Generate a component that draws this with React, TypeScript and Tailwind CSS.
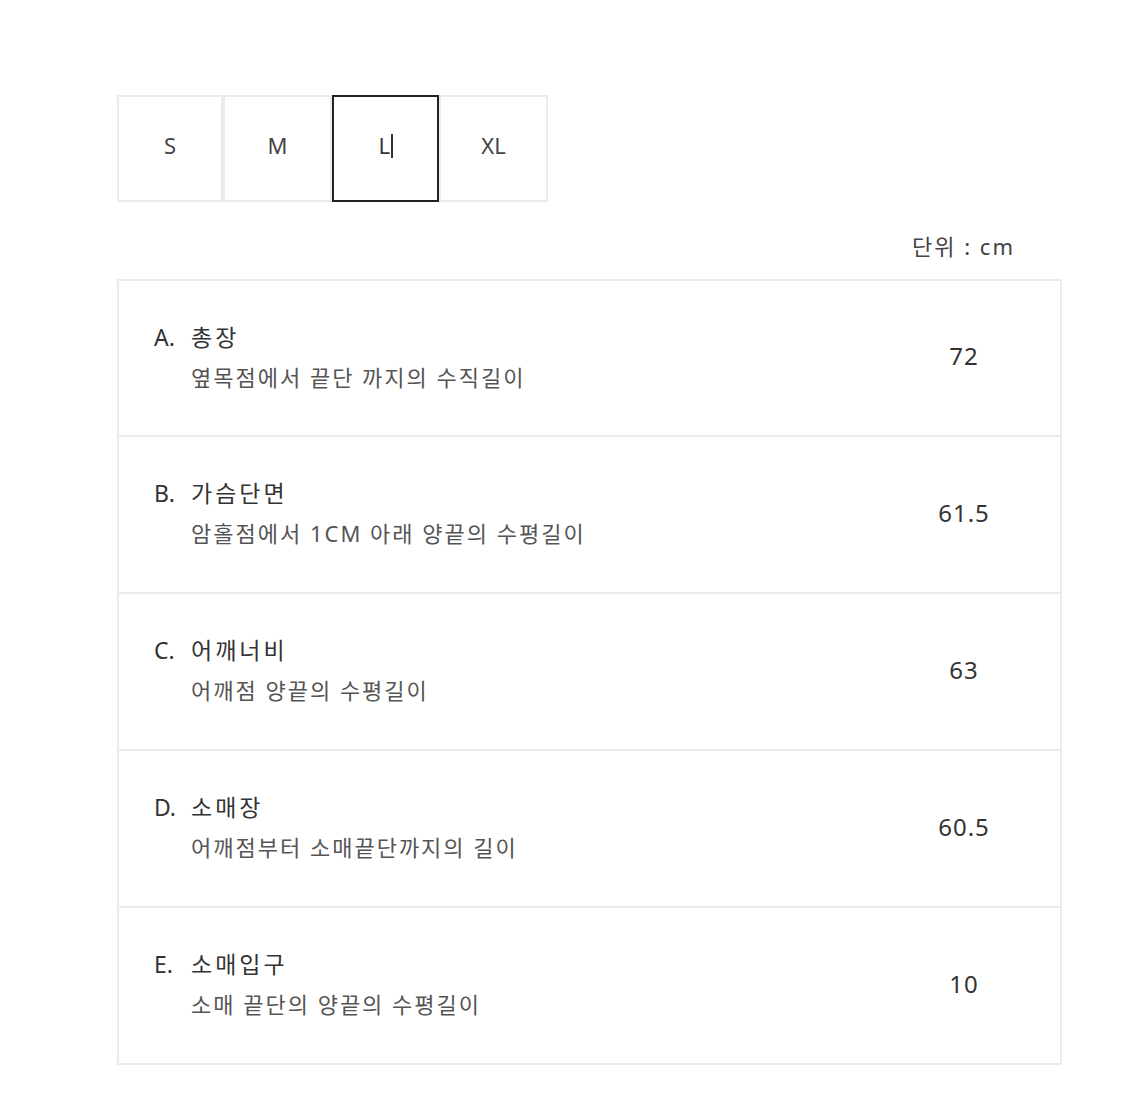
const SIZES = [
  { label: 'S', w: 'w-[106px]' },
  { label: 'M', w: 'w-[109px]' },
  { label: 'L', w: 'w-[107px]' },
  { label: 'XL', w: 'w-[109px]' },
];

const ROWS = [
  { key: 'A.', title: '총장', desc: '옆목점에서 끝단 까지의 수직길이', value: '72' },
  { key: 'B.', title: '가슴단면', desc: '암홀점에서 1CM 아래 양끝의 수평길이', value: '61.5' },
  { key: 'C.', title: '어깨너비', desc: '어깨점 양끝의 수평길이', value: '63' },
  { key: 'D.', title: '소매장', desc: '어깨점부터 소매끝단까지의 길이', value: '60.5' },
  { key: 'E.', title: '소매입구', desc: '소매 끝단의 양끝의 수평길이', value: '10' },
];

export default function App() {
  return (
    <div
      className="w-[1125px] h-[1097px] bg-white text-[#333]"
      style={{ fontFamily: '"Noto Sans", "Noto Sans CJK KR", sans-serif' }}
    >
      <div className="pt-[95px] pl-[117px] pr-[63px]">
        {/* size tabs */}
        <div className="flex">
          {SIZES.map((s) => {
            const active = s.label === 'L';
            return (
              <div
                key={s.label}
                className={
                  active
                    ? `${s.w} h-[107px] flex items-center justify-center pb-[6px] border-2 border-[#222] text-[22px]`
                    : `${s.w} h-[107px] flex items-center justify-center pb-[6px] border-2 border-[#ebebeb] text-[22px] text-[#444]`
                }
              >
                {active ? (
                  <span className="flex items-center">
                    L<span className="w-[1.5px] h-[24px] bg-[#333] ml-[1px]" />
                  </span>
                ) : (
                  s.label
                )}
              </div>
            );
          })}
        </div>

        {/* unit */}
        <div className="flex justify-end pr-[47px] mt-[29px] text-[22px] tracking-[2px] leading-[30px] text-[#444]">
          단위 : cm
        </div>

        {/* table */}
        <div className="mt-[18px] border-2 border-[#ebebeb]">
          {ROWS.map((r, i) => (
            <div
              key={r.key}
              className={
                i === 0
                  ? 'h-[154px] flex items-center pb-[4px]'
                  : 'h-[157px] flex items-center pb-[4px] border-t-2 border-[#ebebeb]'
              }
            >
              <div className="flex-1 pl-[35px]">
                <div className="flex text-[23px] leading-[30px] text-[#333]">
                  <span className="w-[37px]">{r.key}</span>
                  <span className="tracking-[3px]">{r.title}</span>
                </div>
                <div className="pl-[37px] mt-[11px] text-[22px] tracking-[2px] leading-[28px] text-[#555]">
                  {r.desc}
                </div>
              </div>
              <div className="w-[200px] text-center pl-[8px] text-[24px] tracking-[1px] text-[#333]">
                {r.value}
              </div>
            </div>
          ))}
        </div>
      </div>
    </div>
  );
}
